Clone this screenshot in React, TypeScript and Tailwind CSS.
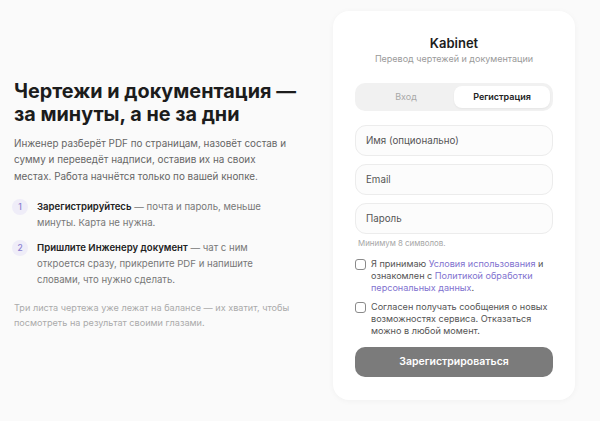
const STEPS = [
  {
    n: 1,
    strong: 'Зарегистрируйтесь',
    rest: ' — почта и пароль, меньше минуты. Карта не нужна.',
  },
  {
    n: 2,
    strong: 'Пришлите Инженеру документ',
    rest: ' — чат с ним откроется сразу, прикрепите PDF и напишите словами, что нужно сделать.',
  },
];

const FIELDS = ['Имя (опционально)', 'Email', 'Пароль'];

const Checkbox = () => (
  <span className="mt-[1px] h-[11px] w-[11px] shrink-0 rounded-[3px] border border-[#8a8a8a] bg-white" />
);

const App = () => {
  return (
    <div
      className="flex h-[421px] w-[600px] items-center justify-between bg-[#fafafa] pb-[11px] pl-[14px] pr-[25px]"
      style={{ fontFamily: 'Inter, "Noto Sans", sans-serif' }}
    >
      <div className="flex w-[290px] flex-col">
        <h1 className="text-[19.8px] font-bold leading-[23px] text-[#1c1c1c]">
          Чертежи и документация — за минуты, а не за дни
        </h1>
        <p className="mt-[9px] w-[275px] text-[9.9px] leading-[16.5px] text-[#666]">
          Инженер разберёт PDF по страницам, назовёт состав и сумму и переведёт надписи, оставив их на своих местах.
          Работа начнётся только по вашей кнопке.
        </p>
        <ul className="mt-[15px] flex flex-col gap-[9px]">
          {STEPS.map((step) => (
            <li key={step.n} className="flex gap-[9px]">
              <span className="-ml-[2px] flex h-[16px] w-[16px] shrink-0 items-center justify-center rounded-full bg-[#efedf8] text-[8.5px] font-medium text-[#8a7fd0]">
                {step.n}
              </span>
              <p className="w-[255px] text-[9.6px] leading-[16px] text-[#777]">
                <span className="font-semibold text-[#222]">{step.strong}</span>
                {step.rest}
              </p>
            </li>
          ))}
        </ul>
        <p className="mt-[12px] w-[285px] text-[9.15px] leading-[15px] text-[#aaa]">
          Три листа чертежа уже лежат на балансе — их хватит, чтобы посмотреть на результат своими глазами.
        </p>
      </div>

      <div className="flex w-[242px] flex-col rounded-[16px] bg-white px-[22px] pb-[23px] pt-[23px] shadow-[0_1px_6px_rgba(0,0,0,0.04)]">
        <div className="text-center">
          <p className="text-[13px] font-semibold leading-[18px] text-[#1c1c1c]">Kabinet</p>
          <p className="text-[9px] leading-[13px] text-[#9a9a9a]">Перевод чертежей и документации</p>
        </div>

        <div className="mt-[18px] flex h-[28px] rounded-[10px] bg-[#f1f1f1] p-[3px]">
          <button className="flex-1 text-[9px] text-[#a8a8a8]">Вход</button>
          <button className="flex-1 rounded-[8px] bg-white text-[9px] font-semibold text-[#222] shadow-[0_1px_2px_rgba(0,0,0,0.05)]">
            Регистрация
          </button>
        </div>

        <div className="mt-[14px] flex flex-col gap-[8px]">
          {FIELDS.map((field) => (
            <input
              key={field}
              placeholder={field}
              className="h-[31px] rounded-[11px] border border-[#ececec] bg-[#fcfcfc] px-[10px] text-[9.75px] text-[#222] placeholder:text-[#555]"
            />
          ))}
        </div>
        <p className="mt-[3px] pl-[3px] text-[7.9px] leading-[12px] text-[#a6a6a6]">Минимум 8 символов.</p>

        <label className="mt-[9px] flex gap-[5px] text-[9.1px] leading-[12px] text-[#555]">
          <Checkbox />
          <span>
            Я принимаю <span className="text-[#7f72cf]">Условия использования</span> и ознакомлен с{' '}
            <span className="text-[#7f72cf]">Политикой обработки персональных данных</span>.
          </span>
        </label>
        <label className="mt-[7px] flex gap-[5px] text-[9.1px] leading-[12px] text-[#555]">
          <Checkbox />
          <span>Согласен получать сообщения о новых возможностях сервиса. Отказаться можно в любой момент.</span>
        </label>

        <button className="mt-[10px] h-[30px] rounded-[10px] bg-[#7b7b7b] text-[10.5px] font-semibold text-white">
          Зарегистрироваться
        </button>
      </div>
    </div>
  );
};

export default App;
